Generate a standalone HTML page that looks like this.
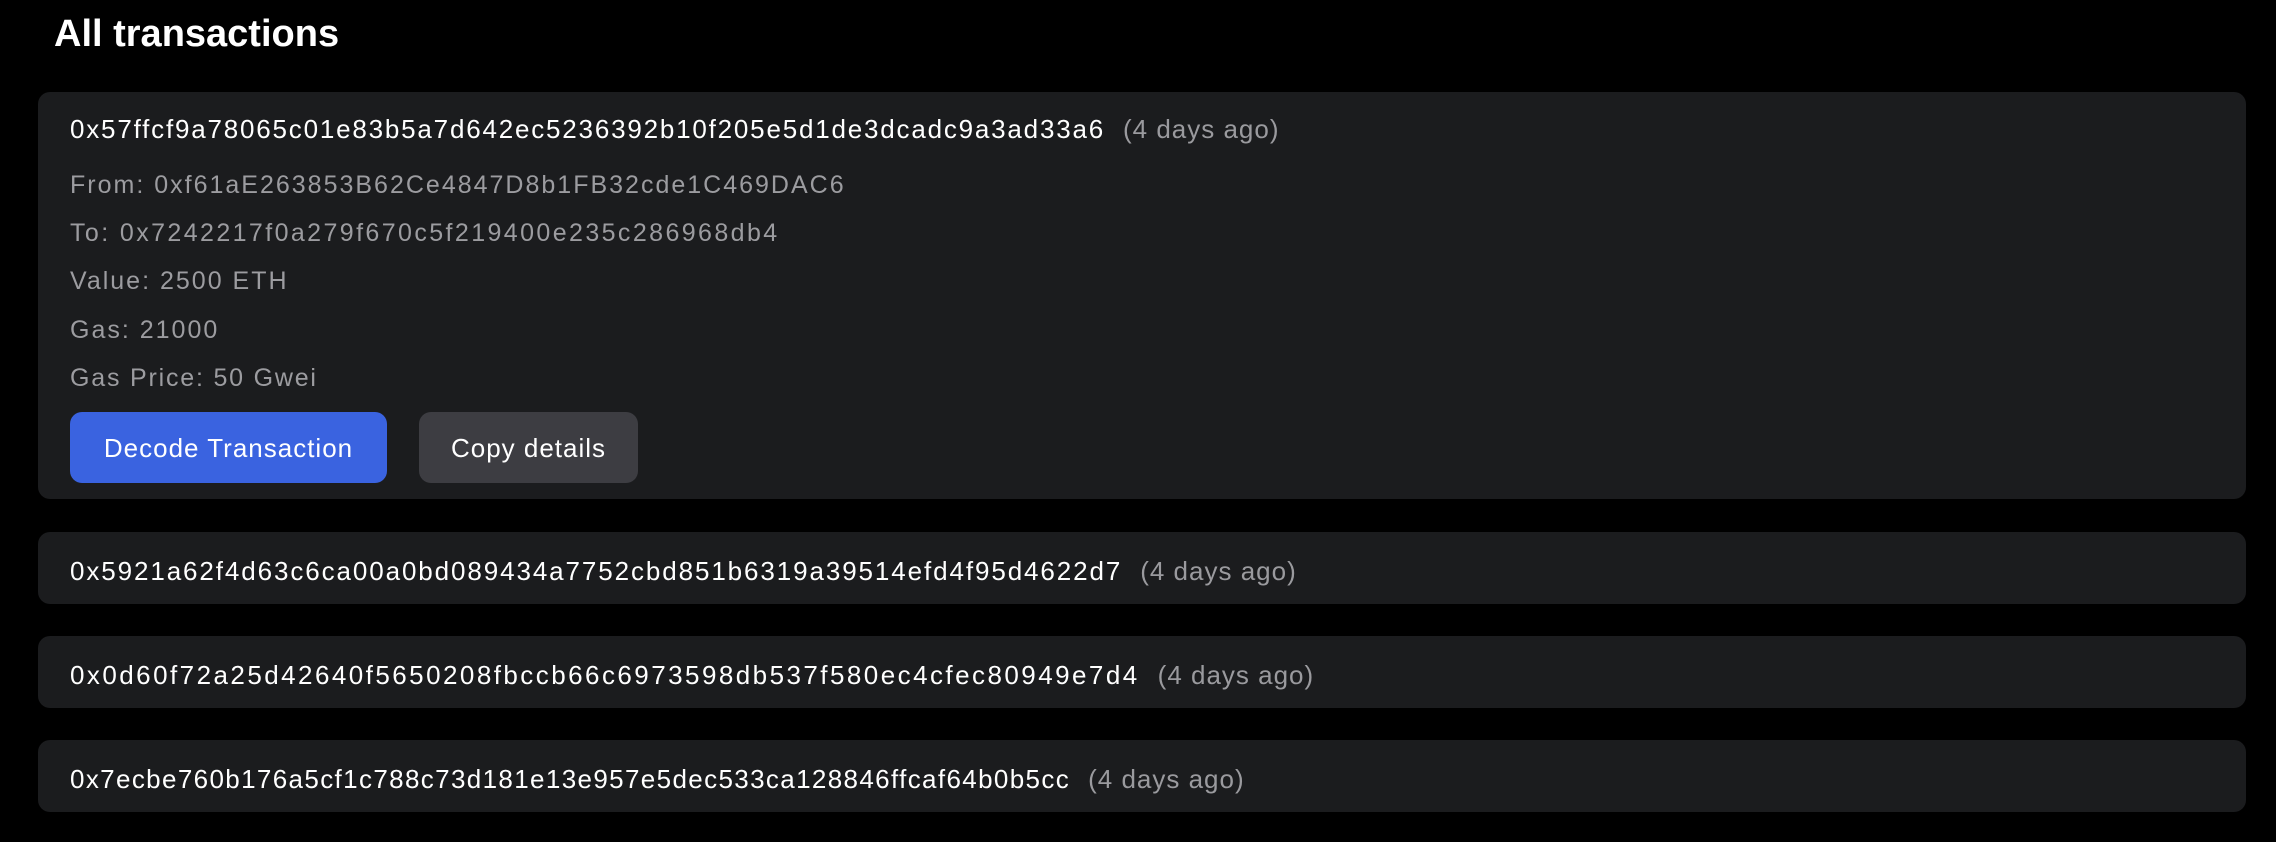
<!DOCTYPE html>
<html><head><meta charset="utf-8"><style>
body{margin:0;background:#000;width:2276px;height:842px;overflow:hidden;font-family:"Liberation Sans",sans-serif;position:relative}
.t{position:absolute;left:54px;top:9px;font-size:38px;font-weight:bold;color:#fff;line-height:50px}
.card{position:absolute;left:38px;width:2208px;background:#1b1c1e;border-radius:12px}
.h{position:absolute;left:32px;font-size:26px;color:#fff;white-space:nowrap;line-height:30px;letter-spacing:1.8px}
.h span{color:#9a9a9e;margin-left:18px;letter-spacing:1px}
.d{position:absolute;left:32px;font-size:25px;color:#9c9ca0;line-height:30px;white-space:nowrap;letter-spacing:2px}
.b{position:absolute;top:320px;height:71px;border-radius:12px;color:#fff;font-size:26px;line-height:73px;text-align:center;letter-spacing:1px}
</style></head><body>
<div class="t">All transactions</div>
<div class="card" style="top:92px;height:407px">
<div class="h" style="top:22px">0x57ffcf9a78065c01e83b5a7d642ec5236392b10f205e5d1de3dcadc9a3ad33a6<span>(4 days ago)</span></div>
<div class="d" style="top:78px">From: 0xf61aE263853B62Ce4847D8b1FB32cde1C469DAC6</div>
<div class="d" style="top:126px;letter-spacing:2.4px">To: 0x7242217f0a279f670c5f219400e235c286968db4</div>
<div class="d" style="top:174px">Value: 2500 ETH</div>
<div class="d" style="top:223px">Gas: 21000</div>
<div class="d" style="top:271px;letter-spacing:1.8px">Gas Price: 50 Gwei</div>
<div class="b" style="left:32px;width:317px;background:#3a63e0">Decode Transaction</div>
<div class="b" style="left:381px;width:219px;background:#3d3d42">Copy details</div>
</div>
<div class="card" style="top:532px;height:72px"><div class="h" style="top:24px;letter-spacing:1.9px">0x5921a62f4d63c6ca00a0bd089434a7752cbd851b6319a39514efd4f95d4622d7<span>(4 days ago)</span></div></div>
<div class="card" style="top:636px;height:72px"><div class="h" style="top:24px;letter-spacing:2.45px">0x0d60f72a25d42640f5650208fbccb66c6973598db537f580ec4cfec80949e7d4<span>(4 days ago)</span></div></div>
<div class="card" style="top:740px;height:72px"><div class="h" style="top:24px;letter-spacing:1.36px">0x7ecbe760b176a5cf1c788c73d181e13e957e5dec533ca128846ffcaf64b0b5cc<span>(4 days ago)</span></div></div>
</body></html>
